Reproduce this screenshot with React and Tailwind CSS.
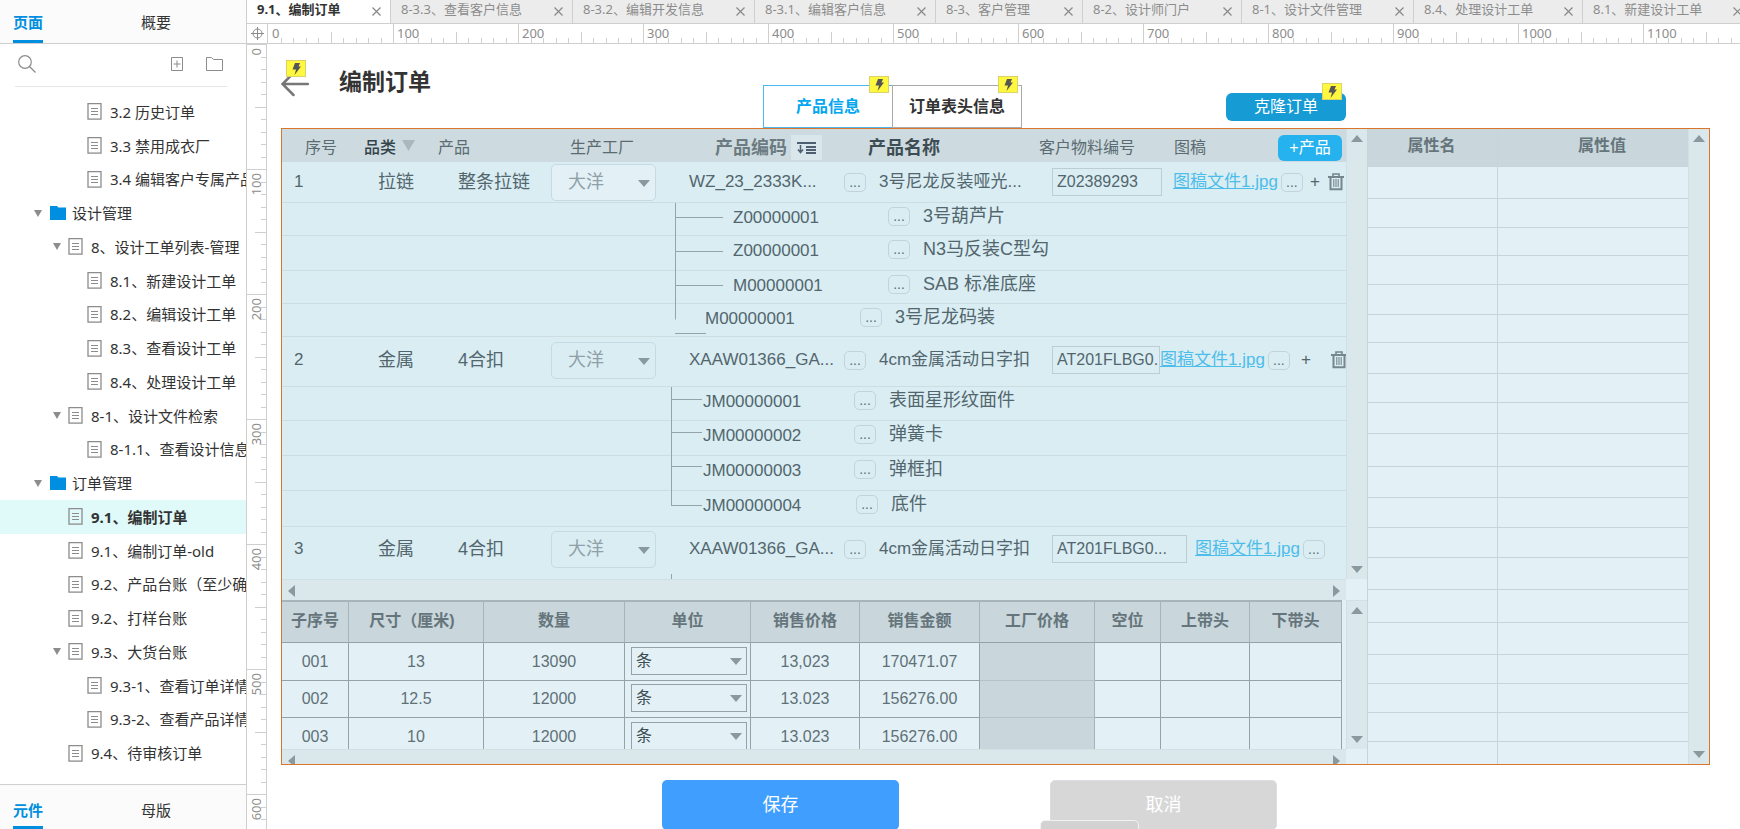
// src/App.jsx
import { useState } from 'react'

const OPEN_TABS = [
  { key: 'a', label: '9.1、编制订单', width: 'w-[144px]' },
  { key: 'b', label: '8-3.3、查看客户信息', width: 'w-[182px]' },
  { key: 'c', label: '8-3.2、编辑开发信息', width: 'w-[182px]' },
  { key: 'd', label: '8-3.1、编辑客户信息', width: 'w-[181px]' },
  { key: 'e', label: '8-3、客户管理', width: 'w-[147px]' },
  { key: 'f', label: '8-2、设计师门户', width: 'w-[159px]' },
  { key: 'g', label: '8-1、设计文件管理', width: 'w-[172px]' },
  { key: 'h', label: '8.4、处理设计工单', width: 'w-[169px]' },
  { key: 'i', label: '8.1、新建设计工单', width: 'w-[169px]' },
]

const TREE = [
  { level: 3, label: '3.2 历史订单' },
  { level: 3, label: '3.3 禁用成衣厂' },
  { level: 3, label: '3.4 编辑客户专属产品' },
  { level: 1, label: '设计管理', folder: true, open: true },
  { level: 2, label: '8、设计工单列表-管理', open: true },
  { level: 3, label: '8.1、新建设计工单' },
  { level: 3, label: '8.2、编辑设计工单' },
  { level: 3, label: '8.3、查看设计工单' },
  { level: 3, label: '8.4、处理设计工单' },
  { level: 2, label: '8-1、设计文件检索', open: true },
  { level: 3, label: '8-1.1、查看设计信息' },
  { level: 1, label: '订单管理', folder: true, open: true },
  { level: 2, label: '9.1、编制订单', current: true },
  { level: 2, label: '9.1、编制订单-old' },
  { level: 2, label: '9.2、产品台账（至少确' },
  { level: 2, label: '9.2、打样台账' },
  { level: 2, label: '9.3、大货台账', open: true },
  { level: 3, label: '9.3-1、查看订单详情' },
  { level: 3, label: '9.3-2、查看产品详情' },
  { level: 2, label: '9.4、待审核订单' },
]

const INDENT = { 1: 'pl-[34px]', 2: 'pl-[53px]', 3: 'pl-[72px]' }

// tree: [svg width, stem x, branch end x, branch y, stem length]
const PRODUCTS = [
  {
    no: 1, type: '拉链', name: '整条拉链', height: 'h-[41px]', pad: 'pb-0', code: 'WZ_23_2333K...', title: '3号尼龙反装哑光...',
    material: 'Z02389293', input: 'w-[110px]', linkGap: 'ml-[11px]', addGap: 'ml-[7px]', trashGap: 'ml-2', filled: true, add: true,
    children: [
      { code: 'Z00000001', title: '3号葫芦片', height: 'h-[33px]', tree: [68, 10, 58, 14, 33], pad: 'pl-12' },
      { code: 'Z00000001', title: 'N3马反装C型勾', height: 'h-[35px]', tree: [68, 10, 58, 15, 35], pad: 'pl-12' },
      { code: 'M00000001', title: 'SAB 标准底座', height: 'h-[33px]', tree: [68, 10, 58, 14, 33], pad: 'pl-12' },
      { code: 'M00000001', title: '3号尼龙码装', height: 'h-[33px]', tree: [40, 10, 41, 29, 15], pad: 'pl-5' },
    ],
  },
  {
    no: 2, type: '金属', name: '4合扣', height: 'h-[50px]', pad: 'pb-[3px]', code: 'XAAW01366_GA...', title: '4cm金属活动日字扣',
    material: 'AT201FLBG0...', input: 'w-[108px]', linkGap: 'ml-0', addGap: 'ml-[11px]', trashGap: 'ml-5', add: true,
    children: [
      { code: 'JM00000001', title: '表面星形纹面件', height: 'h-[34px]', tree: [38, 6, 37, 12, 34], pad: 'pl-[14px]' },
      { code: 'JM00000002', title: '弹簧卡', height: 'h-[35px]', tree: [38, 6, 37, 11, 35], pad: 'pl-[14px]' },
      { code: 'JM00000003', title: '弹框扣', height: 'h-[35px]', tree: [38, 6, 37, 10, 35], pad: 'pl-[14px]' },
      { code: 'JM00000004', title: '底件', height: 'h-9', tree: [38, 6, 37, 14, 14], pad: 'pl-4' },
    ],
  },
  {
    no: 3, type: '金属', name: '4合扣', height: 'h-[47px]', pad: 'pb-[3px]', code: 'XAAW01366_GA...', title: '4cm金属活动日字扣',
    material: 'AT201FLBG0...', input: 'w-[135px]', linkGap: 'ml-2', addGap: 'ml-2', trashGap: 'ml-2', last: true,
    children: [{ code: '', title: '', height: 'h-[34px]', tree: [38, 6, 37, 12, 34], pad: 'pl-4' }],
  },
]

const SIZES = [
  { no: '001', size: '13', qty: '13090', price: '13,023', amount: '170471.07', height: 'h-[38px]' },
  { no: '002', size: '12.5', qty: '12000', price: '13.023', amount: '156276.00', height: 'h-[37px]' },
  { no: '003', size: '10', qty: '12000', price: '13.023', amount: '156276.00', height: 'h-[38px]' },
]

const ATTR_ROWS = [
  'h-8', 'h-[29px]', 'h-7', 'h-[29px]', 'h-[30px]', 'h-7', 'h-[31px]', 'h-[29px]', 'h-[31px]', 'h-[33px]',
  'h-[31px]', 'h-[30px]', 'h-[30px]', 'h-8', 'h-[33px]', 'h-8', 'h-[29px]', 'h-[29px]', 'h-[29px]', 'h-[23px]',
]

/* ---------- small drawings ---------- */

const ARROWS = {
  up: 'M0 7 L6 0 L12 7 Z',
  down: 'M0 0 L12 0 L6 7 Z',
  left: 'M7 0 L7 12 L0 6 Z',
  right: 'M0 0 L0 12 L7 6 Z',
}

function Arrow({ dir, className = '' }) {
  const flat = dir === 'up' || dir === 'down'
  return (
    <svg width={flat ? 12 : 7} height={flat ? 7 : 12} className={`shrink-0 fill-[#8a999f] ${className}`} aria-hidden="true">
      <path d={ARROWS[dir]} />
    </svg>
  )
}

function PageIcon() {
  return (
    <svg width="15" height="17" viewBox="0 0 15 17" className="shrink-0" fill="none" stroke="#8c8c8c" aria-hidden="true">
      <rect x="1" y="0.600" width="13" height="15.500" strokeWidth="1.300" />
      <path d="M4 5.500h7M4 8.500h7M4 11.500h7" />
    </svg>
  )
}

function FolderIcon() {
  return (
    <svg width="17" height="14" viewBox="0 0 17 14" className="shrink-0" aria-hidden="true">
      <path d="M1 0h7l1.500 1.500H17V14H1z" fill="#008fe0" />
    </svg>
  )
}

function CloseIcon() {
  return (
    <svg width="9" height="9" viewBox="0 0 9 9" fill="none" stroke="#888" strokeWidth="1.200" aria-hidden="true">
      <path d="M0.500 0.500l8 8M8.500 0.500l-8 8" />
    </svg>
  )
}

function TrashIcon() {
  return (
    <svg width="16" height="18" viewBox="0 0 16 18" fill="none" stroke="#75868c" aria-hidden="true">
      <path d="M0 4h16" strokeWidth="2" />
      <path d="M5 3V1h6v2" strokeWidth="1.600" />
      <path d="M2.500 5v11.200h11V5" strokeWidth="2" />
      <path d="M5.800 6v8M8 6v8M10.200 6v8" strokeWidth="1.100" />
    </svg>
  )
}

// interaction marker that sits on a widget's top right corner
function Bolt({ className }) {
  return (
    <span className={`absolute flex h-[17px] w-5 items-center justify-center border border-[#d9d36a] bg-[#fff83f] ${className}`}>
      <svg width="9" height="12" viewBox="0 0 9 12" aria-hidden="true">
        <path d="M3 0h5L6.500 3.500H9L2.500 12 4 6.500H0.500z" fill="#555" />
      </svg>
    </span>
  )
}

/* ---------- rulers ---------- */

const STEPS = [1, 2, 3, 4, 5, 6, 7, 8, 9]

function TopRuler() {
  return (
    <div className="flex min-w-0 flex-1 overflow-hidden">
      {[0, 1, 2, 3, 4, 5, 6, 7, 8, 9, 10, 11].map(n => (
        <div key={n} className="relative w-[125px] shrink-0 pl-1 text-[13px] leading-[19px] text-[#8c8c8c]">
          <svg width="125" height="19" className="absolute inset-0" stroke="#cfcfcf" aria-hidden="true">
            {n > 0 && <path d="M0.500 0V19" />}
            {STEPS.map(i => <path key={i} d={`M${Math.round(i * 12.5)}.500 ${i === 5 ? 8 : 14}V19`} />)}
          </svg>
          {n * 100}
        </div>
      ))}
    </div>
  )
}

function SideRuler() {
  return (
    <div className="w-5 shrink-0 overflow-hidden border-r border-[#cfcfcf]">
      {[0, 1, 2, 3, 4, 5, 6].map(n => (
        <div key={n} className="relative h-[125px] pt-1 text-[13px] leading-[19px] text-[#8c8c8c]">
          <svg width="19" height="125" className="absolute inset-0" stroke="#cfcfcf" aria-hidden="true">
            <path d="M0 0.500H19" />
            {STEPS.map(i => <path key={i} d={`M${i === 5 ? 8 : 14} ${Math.round(i * 12.5)}.500H19`} />)}
          </svg>
          <span className="block rotate-180 [writing-mode:vertical-rl]">{n * 100}</span>
        </div>
      ))}
    </div>
  )
}

/* ---------- left panel ---------- */

function PanelTabs({ items, className }) {
  return (
    <div className={`flex shrink-0 gap-[98px] bg-[#fbfbfb] pl-[13px] text-[15px] leading-5 ${className}`}>
      {items.map((t, i) => (
        <button key={t} type="button" className={i === 0 ? 'border-b-3 border-[#008fe0] font-bold text-[#008fe0]' : 'border-b-3 border-transparent text-[#333]'}>
          {t}
        </button>
      ))}
    </div>
  )
}

function Sidebar() {
  return (
    <aside className="flex w-[247px] shrink-0 flex-col overflow-hidden border-r border-[#cfcfcf] bg-white">
      <PanelTabs items={['页面', '概要']} className="h-11 border-b border-[#cfcfcf] pt-1" />
      <div className="mr-[19px] ml-[15px] flex h-[43px] shrink-0 items-center border-b border-[#e6e6e6] pr-1 pb-[3px] pl-[3px]">
        <svg width="18" height="18" viewBox="0 0 18 18" fill="none" stroke="#8c8c8c" strokeWidth="1.200" aria-hidden="true">
          <circle cx="7" cy="7" r="6.300" />
          <path d="M11.500 11.500l6 6" />
        </svg>
        <input aria-label="搜索页面" className="h-6 min-w-0 flex-1 px-2 text-[15px] outline-none" />
        <button type="button" aria-label="添加页面">
          <svg width="12" height="14" viewBox="0 0 12 14" fill="none" stroke="#8c8c8c" aria-hidden="true">
            <path d="M0.500 0.500h11v13H0.500zM6 3.500v7M2.500 7h7" />
          </svg>
        </button>
        <button type="button" aria-label="添加文件夹" className="ml-[23px]">
          <svg width="17" height="14" viewBox="0 0 17 14" fill="none" stroke="#8c8c8c" aria-hidden="true">
            <path d="M0.500 0.500h5l2 2h9v11H0.500z" />
          </svg>
        </button>
      </div>
      <ul className="flex flex-1 flex-col pt-2 pb-[14px]">
        {TREE.map(item => (
          <li key={item.label} className={`flex min-h-6 flex-1 items-center ${INDENT[item.level]} ${item.current ? 'bg-[#e0fafa] font-bold' : ''}`}>
            <span className="w-[15px] shrink-0">
              {item.open && (
                <svg width="8" height="7" aria-hidden="true"><path d="M0 0h8L4 7z" fill="#8c8c8c" /></svg>
              )}
            </span>
            {item.folder ? <FolderIcon /> : <PageIcon />}
            <a href="#" className={`text-[15px] leading-5 whitespace-nowrap text-[#333] ${item.folder ? 'ml-[6px]' : 'ml-2'}`}>{item.label}</a>
          </li>
        ))}
      </ul>
      <PanelTabs items={['元件', '母版']} className="h-[45px] border-t border-[#cfcfcf] pt-[9px]" />
    </aside>
  )
}

/* ---------- product grid ---------- */

function Dots() {
  return (
    <button type="button" className="h-[19px] w-[22px] shrink-0 rounded-[5px] border border-[#c3d3d9] text-sm leading-[17px] text-[#5b6f76]">...</button>
  )
}

function ProductRow({ row }) {
  const line = `${row.pad} ${row.last ? '' : 'border-b border-[#cddde2]'}`
  return (
    <tr className={row.height}>
      <td className={`pl-3 ${line}`}>{row.no}</td>
      <td className={`pl-[18px] text-[18px] ${line}`}>{row.type}</td>
      <td className={`pl-[23px] text-[18px] ${line}`}>{row.name}</td>
      <td className={`pl-[6px] ${line}`}>
        <div className="relative w-[105px]">
          <select
            aria-label={`生产工厂 ${row.no}`}
            className={`block h-[37px] w-full appearance-none rounded-[5px] border border-[#c6dae3] pl-4 text-[18px] leading-6 text-[#8fa0a6] ${row.filled ? 'bg-[#e3f1f7]' : ''}`}
          >
            <option>大洋</option>
          </select>
          <Arrow dir="down" className="pointer-events-none absolute top-4 right-[6px]" />
        </div>
      </td>
      <td className={`pl-6 ${line}`}>{row.code}</td>
      <td className={`pl-1 ${line}`}>
        <div className="flex items-center gap-[13px]"><Dots />{row.title}</div>
      </td>
      <td colSpan={2} className={`pl-4 ${line}`}>
        <div className="flex items-center">
          <input
            aria-label={`客户物料编号 ${row.no}`}
            defaultValue={row.material}
            className={`h-7 shrink-0 border border-[#bccdd4] pl-1 text-base leading-6 ${row.input}`}
          />
          <a href="#" className={`text-[#4dbdea] underline ${row.linkGap}`}>图稿文件1.jpg</a>
          <span className="ml-[3px] flex"><Dots /></span>
          {row.add && (
            <>
              <button type="button" className={row.addGap}>+</button>
              <button type="button" aria-label="删除" className={`shrink-0 ${row.trashGap}`}><TrashIcon /></button>
            </>
          )}
        </div>
      </td>
    </tr>
  )
}

function ChildRow({ item }) {
  const [w, x, end, branch, stem] = item.tree
  return (
    <tr className={item.height}>
      <td colSpan={4} className="border-b border-[#cddde2]" />
      <td className="border-b border-[#cddde2] align-top">
        <div className="flex">
          <svg width={w} height="30" className="shrink-0 overflow-visible" stroke="#93a5ab" aria-hidden="true">
            <path d={`M${x}.500 0V${stem}.500M${x} ${branch}.500H${end}`} />
          </svg>
          <span className="leading-[30px]">{item.code}</span>
        </div>
      </td>
      <td colSpan={3} className={`border-b border-[#cddde2] align-top ${item.pad}`}>
        {item.title && (
          <div className="flex items-center gap-[13px] text-[18px] leading-[27px]"><Dots />{item.title}</div>
        )}
      </td>
    </tr>
  )
}

function ProductTable() {
  return (
    <div className="h-[450px] overflow-hidden bg-[#daedf3]">
      <table className="w-[1064px] table-fixed border-separate border-spacing-0 text-left text-[17px] leading-6 whitespace-nowrap text-[#52666d]">
        <colgroup>
          <col className="w-[78px]" />
          <col className="w-[75px]" />
          <col className="w-[110px]" />
          <col className="w-[120px]" />
          <col className="w-[175px]" />
          <col className="w-[196px]" />
          <col className="w-[134px]" />
          <col className="w-[176px]" />
        </colgroup>
        <thead className="bg-[#cddbe0] text-base leading-6 text-[#5b6b71]">
          <tr className="h-[33px]">
            <th className="pt-1 pl-[23px] font-normal">序号</th>
            <th className="pt-1 pl-1 font-medium text-[#33434a]">
              <span className="flex items-start gap-[6px]">
                品类
                <svg width="13" height="11" className="mt-1" aria-hidden="true"><path d="M0 0h13L6.500 11z" fill="#a9b8be" /></svg>
              </span>
            </th>
            <th className="pt-1 pl-[3px] font-normal">产品</th>
            <th className="pt-1 pl-[25px] font-normal">生产工厂</th>
            <th className="pt-1 pl-[50px] text-[18px] font-bold text-[#6b7b81]">
              <span className="flex items-center gap-1">
                产品编码
                <svg width="31" height="25" viewBox="0 0 31 25" className="bg-[#d9e7ed]" fill="none" stroke="#4f5f72" strokeWidth="2" aria-hidden="true">
                  <path d="M6 8h19M15 12h10M15 15h10M15 18h10" />
                  <path d="M9.500 10v7M7 14.500l2.500 3 2.500-3" strokeWidth="1.500" />
                </svg>
              </span>
            </th>
            <th className="pt-1 pl-7 text-[18px] font-bold text-[#3d4d54]">产品名称</th>
            <th className="pt-1 pl-[3px] font-normal">客户物料编号</th>
            <th className="pt-1 pl-1 font-normal">
              <span className="flex items-center justify-between pr-1">
                图稿
                <button type="button" className="h-[26px] w-16 rounded-[6px] bg-[#25b2ee] text-white">+产品</button>
              </span>
            </th>
          </tr>
        </thead>
        {PRODUCTS.map(p => (
          <tbody key={p.no}>
            <ProductRow row={p} />
            {p.children.map((c, i) => <ChildRow key={i} item={c} />)}
          </tbody>
        ))}
      </table>
    </div>
  )
}

function SizeTable() {
  const cell = 'border-r border-b border-[#93a3a9] text-center'
  const head = 'border-t-2 border-r border-b border-t-[#a5b5bb] border-r-[#a5b5bb] border-b-[#93a3a9] bg-[#c9d6dc] pb-[2px] text-center font-bold text-[#65757b]'
  return (
    <div className="h-[149px] overflow-hidden bg-[#e3f1f7]">
      <table className="w-[1060px] table-fixed border-separate border-spacing-0 text-base leading-6 whitespace-nowrap text-[#5f7076]">
        <thead>
          <tr className="h-[43px]">
            <th className={`w-[67px] ${head}`}>子序号</th>
            <th className={`w-[135px] pr-2 ${head}`}>尺寸（厘米)</th>
            <th className={`w-[141px] ${head}`}>数量</th>
            <th className={`w-[126px] ${head}`}>单位</th>
            <th className={`w-[109px] ${head}`}>销售价格</th>
            <th className={`w-[120px] ${head}`}>销售金额</th>
            <th className={`w-[115px] ${head}`}>工厂价格</th>
            <th className={`w-[66px] ${head}`}>空位</th>
            <th className={`w-[89px] ${head}`}>上带头</th>
            <th className={`w-[92px] ${head}`}>下带头</th>
          </tr>
        </thead>
        <tbody>
          {SIZES.map(s => (
            <tr key={s.no} className={s.height}>
              <td className={cell}>{s.no}</td>
              <td className={cell}>{s.size}</td>
              <td className={cell}>{s.qty}</td>
              <td className={`pr-[3px] pb-[2px] ${cell}`}>
                <div className="relative ml-auto w-[116px]">
                  <select aria-label={`单位 ${s.no}`} className="block h-7 w-full appearance-none border border-[#93a3a9] pl-1 text-base leading-6 text-[#3d4d54]">
                    <option>条</option>
                  </select>
                  <Arrow dir="down" className="pointer-events-none absolute top-[11px] right-[5px]" />
                </div>
              </td>
              <td className={cell}>{s.price}</td>
              <td className={cell}>{s.amount}</td>
              <td className="border-r border-b border-r-[#a5b5bb] border-b-[#b4c3c9] bg-[#c9d6dc]" />
              <td className={cell} />
              <td className={cell} />
              <td className={cell} />
            </tr>
          ))}
        </tbody>
      </table>
    </div>
  )
}

function HBar({ className }) {
  return (
    <div className={`flex justify-between overflow-hidden border-t border-[#d0e0e5] bg-[#dae8ec] px-[6px] pt-[5px] ${className}`}>
      <Arrow dir="left" />
      <Arrow dir="right" />
    </div>
  )
}

function VBar({ className }) {
  return (
    <div className={`flex w-[21px] flex-col items-center justify-between border-l border-[#d0e0e5] bg-[#dae8ec] py-[6px] ${className}`}>
      <Arrow dir="up" />
      <Arrow dir="down" />
    </div>
  )
}

function AttrTable() {
  return (
    <div className="h-[635px] min-w-0 flex-1 overflow-hidden">
      <table className="w-full table-fixed border-separate border-spacing-0 border-l border-[#c6d5db] bg-[#e3f1f7] text-base leading-6 text-[#5b6b71]">
        <thead>
          <tr className="h-[38px] bg-[#c9d6dc]">
            <th className="w-[130px] border-r border-b border-[#c6d5db] pr-[2px] pb-1 font-bold text-[#65757b]">属性名</th>
            <th className="border-b border-[#c6d5db] pb-1 pl-[18px] font-bold text-[#65757b]">属性值</th>
          </tr>
        </thead>
        <tbody>
          {ATTR_ROWS.map((h, i) => (
            <tr key={i} className={h}>
              <td className="border-r border-b border-[#c6d5db]" />
              <td className="border-b border-[#c6d5db]" />
            </tr>
          ))}
        </tbody>
      </table>
    </div>
  )
}

/* ---------- canvas ---------- */

function Canvas() {
  return (
    <main className="min-w-0 flex-1 overflow-hidden bg-white pr-[30px] pl-[14px] font-['Liberation_Sans','Noto_Sans_CJK_SC',sans-serif]">
      <header className="flex h-[84px] w-[1065px]">
        <div className="flex w-[482px] items-center gap-[30px] pb-1">
          <button type="button" aria-label="返回" className="relative">
            <svg width="28" height="26" viewBox="0 0 28 26" fill="none" stroke="#777" strokeWidth="2.500" strokeLinecap="round" aria-hidden="true">
              <path d="M1.500 13H27M12.500 2L1.500 13l11 11" />
            </svg>
            <Bolt className="-top-[11px] left-[5px]" />
          </button>
          <h1 className="pb-1 text-[23px] leading-7 font-bold text-[#333]">编制订单</h1>
        </div>
        <div className="flex items-end text-base font-bold">
          <button type="button" className="relative h-[43px] w-[130px] border border-[#4db8ee] text-[#02a7f0]">
            产品信息
            <Bolt className="-top-[10px] right-[3px]" />
          </button>
          <button type="button" className="relative -ml-px h-[43px] w-[130px] border border-[#aaa] text-[#333]">
            订单表头信息
            <Bolt className="-top-[10px] right-[3px]" />
          </button>
        </div>
        <div className="ml-auto flex items-end pb-[7px]">
          <button type="button" className="relative h-7 w-[120px] rounded-[6px] bg-[#169bd5] text-base text-white">
            克隆订单
            <Bolt className="-top-[10px] right-1" />
          </button>
        </div>
      </header>

      <section className="flex border border-[#d9762b] bg-[#e3f1f7]">
        <div className="w-[1064px] shrink-0">
          <ProductTable />
          <HBar className="h-[21px]" />
          <SizeTable />
          <HBar className="h-[15px]" />
        </div>
        <div className="shrink-0">
          <VBar className="h-[450px]" />
          <VBar className="mt-[21px] h-[149px] border-t" />
        </div>
        <AttrTable />
        <VBar className="shrink-0" />
      </section>

      <footer className="flex gap-[151px] pt-[15px] pl-[381px] text-[18px] text-white">
        <button type="button" className="h-[50px] w-[237px] rounded-[5px] bg-[#409eff]">保存</button>
        <div className="relative">
          <button type="button" className="h-[50px] w-[227px] rounded-[5px] border border-[#dcdce4] bg-[#d7d7d7]">取消</button>
          <span className="absolute top-10 -left-[10px] h-8 w-[99px] rounded-[5px] border border-[#f2f2f2] bg-[#d2d2d2]" />
        </div>
      </footer>
    </main>
  )
}

export default function App() {
  const [active, setActive] = useState('a')

  return (
    <div className="flex h-screen overflow-hidden bg-white font-['Noto_Sans','Noto_Sans_CJK_SC',sans-serif]">
      <Sidebar />
      <div className="flex min-w-0 flex-1 flex-col">
        <nav className="flex h-6 shrink-0 overflow-hidden border-b border-[#cfcfcf] bg-[#ececec]">
          {OPEN_TABS.map(t => (
            <div
              key={t.key}
              className={`flex shrink-0 items-center justify-between border-r border-[#cfcfcf] pr-[9px] pl-[10px] ${t.width} ${active === t.key ? 'bg-white font-bold text-[#333]' : 'text-[#8c8c8c]'}`}
            >
              <button type="button" onClick={() => setActive(t.key)} className="pb-[6px] text-[13px] leading-[18px] whitespace-nowrap">{t.label}</button>
              <button type="button" aria-label="关闭"><CloseIcon /></button>
            </div>
          ))}
        </nav>
        <div className="flex h-5 shrink-0 border-b border-[#cfcfcf]">
          <div className="flex w-[21px] shrink-0 items-center justify-center border-r border-[#cfcfcf]">
            <svg width="13" height="13" viewBox="0 0 13 13" fill="none" stroke="#8c8c8c" aria-hidden="true">
              <circle cx="6.500" cy="6.500" r="4.500" />
              <path d="M6.500 0v13M0 6.500h13" />
            </svg>
          </div>
          <TopRuler />
        </div>
        <div className="flex min-h-0 flex-1">
          <SideRuler />
          <Canvas />
        </div>
      </div>
    </div>
  )
}
